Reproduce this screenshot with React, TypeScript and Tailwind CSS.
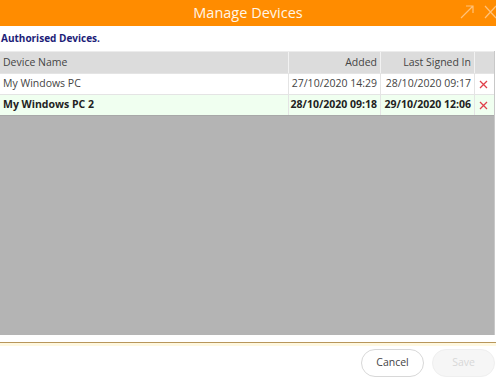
export default function App() {
  const rows = [
    { name: 'My Windows PC', added: '27/10/2020 14:29', last: '28/10/2020 09:17', current: false },
    { name: 'My Windows PC 2', added: '28/10/2020 09:18', last: '29/10/2020 12:06', current: true },
  ]

  return (
    <div className="w-[496px] h-[381px] bg-white flex flex-col overflow-hidden text-[#333] font-['Open_Sans',sans-serif]">
      {/* title bar */}
      <div className="relative h-[26px] bg-[#ff8c00] flex items-center justify-center shrink-0">
        <span className="text-[14.5px] text-[#fff6e8] leading-none">Manage Devices</span>
        <div className="absolute right-0 top-[5px] flex items-center gap-[10px] text-[#ffc27a]">
          <svg width="14" height="14" viewBox="0 0 14 14" fill="none" stroke="currentColor" strokeWidth="1.2">
            <path d="M1 13 L13 1 M6 1 H13 V8" />
          </svg>
          <svg width="12" height="14" viewBox="0 0 12 14" fill="none" stroke="currentColor" strokeWidth="1.2">
            <path d="M1 1 L12 13 M12 1 L1 13" />
          </svg>
        </div>
      </div>

      <div className="h-[25px] flex items-center px-[1px] text-[10px] font-bold text-[#1c1c78] shrink-0">
        Authorised Devices.
      </div>

      {/* table */}
      <div className="flex-1 flex flex-col bg-[#b4b4b4] border-r border-[#c8c8c8] w-[495px] whitespace-nowrap">
        <div className="flex h-[22px] bg-[#dcdcdc] border-t border-[#ececec] text-[10.5px] text-[#444]">
          <div className="w-[288px] px-[3px] flex items-center">Device Name</div>
          <div className="w-[92px] px-[3px] flex items-center justify-end border-l border-[#f2f2f2]">Added</div>
          <div className="w-[94px] px-[3px] flex items-center justify-end border-l border-[#f2f2f2]">Last Signed In</div>
          <div className="w-[18px] border-l border-[#f2f2f2]" />
        </div>
        {rows.map((r) => (
          <div
            key={r.name}
            className={`flex h-[21px] text-[10.5px] border-t border-[#e4e4e4] ${r.current ? 'bg-[#f0fff0] font-bold text-[#222]' : 'bg-white text-[#444]'}`}
          >
            <div className="w-[288px] px-[3px] flex items-center">{r.name}</div>
            <div className="w-[92px] px-[3px] flex items-center justify-end border-l border-[#e4e4e4]">{r.added}</div>
            <div className="w-[94px] px-[3px] flex items-center justify-end border-l border-[#e4e4e4]">{r.last}</div>
            <div className="w-[18px] flex items-center justify-center border-l border-[#e4e4e4] text-[#e0404a]">
              <svg width="9" height="9" viewBox="0 0 9 9" fill="none" stroke="currentColor" strokeWidth="1.3">
                <path d="M1 1 L8 8 M8 1 L1 8" />
              </svg>
            </div>
          </div>
        ))}
        <div className="border-t border-[#a8a8a8]" />
      </div>

      {/* footer */}
      <div className="h-[7px] shrink-0" />
      <div className="h-[1px] bg-[#b8965a] shrink-0" />
      <div className="h-[3px] bg-[#fff8e0] shrink-0" />
      <div className="h-[35px] shrink-0 flex items-start justify-end gap-[8px] pt-[3px] pr-[1px]">
        <button className="w-[63px] h-[28px] rounded-full border border-[#d8d8d8] bg-white text-[10.5px] text-[#444]">
          Cancel
        </button>
        <button className="w-[63px] h-[28px] rounded-full border border-[#efefef] bg-[#f6f6f6] text-[10.5px] text-[#d8d8d8]">
          Save
        </button>
      </div>
    </div>
  )
}
